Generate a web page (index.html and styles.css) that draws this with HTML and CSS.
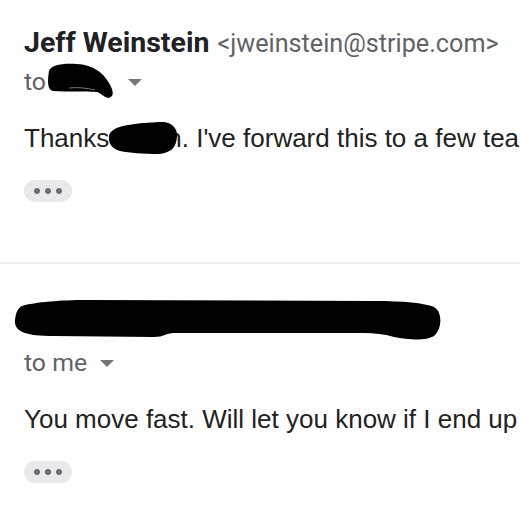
FILE: index.html
```html
<!DOCTYPE html>
<html lang="en">
<head>
<meta charset="utf-8">
<title>Email thread</title>
<link rel="stylesheet" href="styles.css">
</head>
<body>
<div class="thread">
  <section class="message first">
    <div class="sender-row">
      <span class="sender-name">Jeff Weinstein</span>
      <span class="sender-email">&lt;jweinstein@stripe.com&gt;</span>
    </div>
    <div class="recipient-row">
      <span class="to">to</span>
      <svg class="blob blob-to" width="68" height="36" viewBox="0 0 68 36"><path d="M2,8 C4,2 15,0 30,1 C45,2 55,8 62,20 C66,27 68,33 62,35 C58,35 55,31 50,29 C38,28 20,29 6,28 C1,27 0,20 2,8 Z" fill="#000"/><path d="M22,25 C30,24 40,25 48,27" stroke="#777" stroke-width="1" fill="none"/></svg>
      <span class="caret"></span>
    </div>
    <p class="body-text">Thanks<svg class="blob blob-name" width="70" height="34" viewBox="0 0 70 34"><path d="M4,10 C10,4 30,2 52,1 C64,0 70,8 69,16 C68,26 64,32 50,33 C35,33 22,32 12,30 C4,28 0,22 1,15 C1,13 2,12 4,10 Z" fill="#000"/></svg>n. I've forward this to a few tea</p>
    <div class="more"><span class="dot"></span><span class="dot"></span><span class="dot"></span></div>
  </section>
  <section class="message second">
    <div class="sender-row redacted">
      <svg class="blob blob-sender" width="430" height="44" viewBox="0 0 430 44"><path d="M8,8 C20,4 50,2 70,2 L360,3 C390,3 410,5 420,9 C428,13 429,30 420,38 C412,43 395,42 380,39 C370,36 360,35 350,35 L160,35 C152,35 150,39 140,39 L40,38 C10,38 0,33 1,22 C2,14 4,10 8,8 Z" fill="#000"/></svg>
    </div>
    <div class="recipient-row">
      <span class="to">to me</span>
      <span class="caret"></span>
    </div>
    <p class="body-text">You move fast. Will let you know if I end up</p>
    <div class="more"><span class="dot"></span><span class="dot"></span><span class="dot"></span></div>
  </section>
</div>
</body>
</html>
```

FILE: styles.css
```css
html, body {
  margin: 0;
  padding: 0;
  background: #ffffff;
  overflow: hidden;
}

.thread {
  width: 520px;
  overflow: hidden;
}

.message {
  padding-left: 24px;
  display: flex;
  flex-direction: column;
  align-items: flex-start;
}

.message.first {
  padding-top: 27px;
  padding-bottom: 60px;
  border-bottom: 2px solid #efefef;
}

.message.second {
  padding-top: 44px;
}

.sender-row {
  display: flex;
  align-items: baseline;
  height: 32px;
  line-height: 32px;
  white-space: nowrap;
  font-family: Roboto, "Liberation Sans", sans-serif;
}

.sender-name {
  font-size: 28.5px;
  font-weight: 700;
  color: #202124;
  margin-right: 8px;
}

.sender-email {
  font-size: 25.2px;
  color: #5f6368;
}

.sender-row.redacted {
  align-items: center;
  margin-left: -10px;
}

.blob-sender {
  margin-bottom: 8px;
}

.recipient-row {
  display: flex;
  align-items: center;
  margin-top: 9px;
  height: 28px;
  font-family: Roboto, "Liberation Sans", sans-serif;
  font-size: 24.8px;
  color: #5f6368;
}

.to {
  line-height: 28px;
}

.blob {
  display: block;
  flex: none;
}

.blob-to {
  margin-top: -2px;
  margin-left: 1px;
}

.caret {
  width: 0;
  height: 0;
  border-left: 7px solid transparent;
  border-right: 7px solid transparent;
  border-top: 7px solid #777777;
  margin-left: 13px;
}

.body-text {
  margin: 27px 0 0 0;
  font-family: "Liberation Sans", Arial, sans-serif;
  font-size: 26px;
  line-height: 30px;
  height: 30px;
  color: #222222;
  white-space: nowrap;
  display: flex;
  align-items: center;
}

.blob-name {
  position: relative;
  z-index: 1;
  margin: -2px -11px -2px -1px;
}

.more {
  margin-top: 27px;
  width: 48px;
  height: 22px;
  border-radius: 11px;
  background: #e8e9ec;
  display: flex;
  align-items: center;
  justify-content: center;
  gap: 5px;
}

.dot {
  width: 6px;
  height: 6px;
  border-radius: 50%;
  background: #6b6e73;
}
```
